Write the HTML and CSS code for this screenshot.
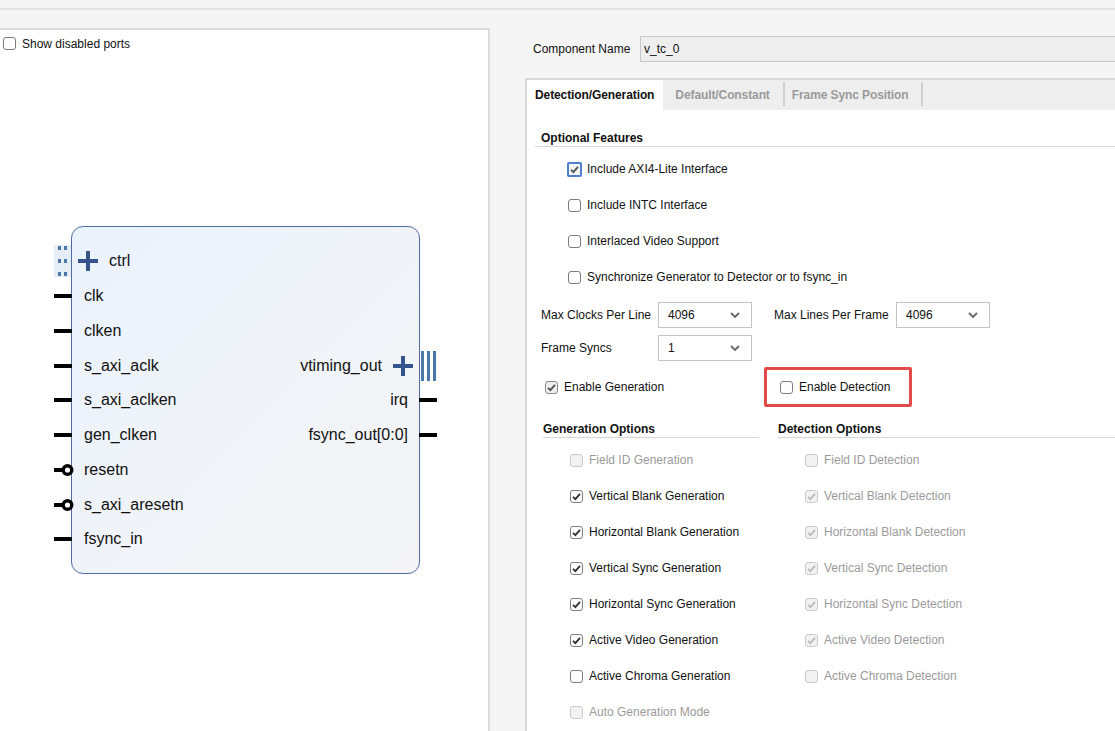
FILE: index.html
```html
<!DOCTYPE html>
<html>
<head>
<meta charset="utf-8">
<link rel="stylesheet" href="styles.css">
</head>
<body>
<div class="topbar"></div>
<div class="main">
  <div class="left-panel">
    <div class="show-row"><span class="cb"></span><span class="lbl">Show disabled ports</span></div>
    <div class="canvas">
      <div class="block">
        <div class="prow"><div class="pl ctrl"><span class="busl"><i></i><i></i><i></i><i></i><i></i><i></i></span><span class="plus"></span>ctrl</div></div>
        <div class="prow"><span class="pin-l"></span><div class="pl">clk</div></div>
        <div class="prow"><span class="pin-l"></span><div class="pl">clken</div></div>
        <div class="prow"><span class="pin-l"></span><div class="pl">s_axi_aclk</div><div class="pr">vtiming_out<span class="plus rplus"></span></div><span class="busr"><i></i><i></i><i></i></span></div>
        <div class="prow"><span class="pin-l"></span><div class="pl">s_axi_aclken</div><div class="pr">irq</div><span class="pin-r"></span></div>
        <div class="prow"><span class="pin-l"></span><div class="pl">gen_clken</div><div class="pr">fsync_out[0:0]</div><span class="pin-r"></span></div>
        <div class="prow"><svg class="pin-inv" width="24" height="14" viewBox="0 0 24 14"><line x1="0" y1="7" x2="9" y2="7" stroke="#000" stroke-width="4"/><circle cx="13.5" cy="7" r="4.3" fill="#fff" stroke="#000" stroke-width="3.4"/></svg><div class="pl">resetn</div></div>
        <div class="prow"><svg class="pin-inv" width="24" height="14" viewBox="0 0 24 14"><line x1="0" y1="7" x2="9" y2="7" stroke="#000" stroke-width="4"/><circle cx="13.5" cy="7" r="4.3" fill="#fff" stroke="#000" stroke-width="3.4"/></svg><div class="pl">s_axi_aresetn</div></div>
        <div class="prow"><span class="pin-l"></span><div class="pl">fsync_in</div></div>
      </div>
    </div>
  </div>
  <div class="right-panel">
    <div class="comp-row"><span class="comp-lbl">Component Name</span><div class="comp-input">v_tc_0</div></div>
    <div class="tabpane">
      <div class="tabs">
        <div class="tab active">Detection/Generation</div>
        <div class="tab sep">Default/Constant</div>
        <div class="tab sep t3">Frame Sync Position</div>
      </div>
      <div class="content">
        <div class="sec-head opt-head">Optional Features</div>
        <div class="opt-rows">
          <div class="row"><span class="cb focus"><svg viewBox="0 0 13 13"><path d="M3 6.8 L5.4 9.2 L10 3.8" fill="none" stroke="#555" stroke-width="1.9"/></svg></span><span class="lbl">Include AXI4-Lite Interface</span></div>
          <div class="row"><span class="cb"></span><span class="lbl">Include INTC Interface</span></div>
          <div class="row"><span class="cb"></span><span class="lbl">Interlaced Video Support</span></div>
          <div class="row"><span class="cb"></span><span class="lbl">Synchronize Generator to Detector or to fsync_in</span></div>
        </div>
        <div class="param-row">
          <span class="plbl w1">Max Clocks Per Line</span>
          <div class="select"><span>4096</span><svg width="10" height="6" viewBox="0 0 10 6"><path d="M1 1 L5 5 L9 1" fill="none" stroke="#666" stroke-width="1.8"/></svg></div>
          <span class="plbl w2">Max Lines Per Frame</span>
          <div class="select"><span>4096</span><svg width="10" height="6" viewBox="0 0 10 6"><path d="M1 1 L5 5 L9 1" fill="none" stroke="#666" stroke-width="1.8"/></svg></div>
        </div>
        <div class="param-row fs-row">
          <span class="plbl w1">Frame Syncs</span>
          <div class="select"><span>1</span><svg width="10" height="6" viewBox="0 0 10 6"><path d="M1 1 L5 5 L9 1" fill="none" stroke="#666" stroke-width="1.8"/></svg></div>
        </div>
        <div class="enable-row">
          <div class="en-gen"><span class="cb gray"><svg viewBox="0 0 13 13"><path d="M3 6.8 L5.4 9.2 L10 3.8" fill="none" stroke="#555" stroke-width="1.9"/></svg></span><span class="lbl">Enable Generation</span></div>
          <div class="en-det"><span class="cb"></span><span class="lbl">Enable Detection</span></div>
        </div>
        <div class="cols">
          <div class="col gen">
            <div class="sec-head">Generation Options</div>
            <div class="row dis"><span class="cb"></span><span class="lbl">Field ID Generation</span></div>
            <div class="row"><span class="cb"><svg viewBox="0 0 13 13"><path d="M3 6.8 L5.4 9.2 L10 3.8" fill="none" stroke="#333" stroke-width="1.9"/></svg></span><span class="lbl">Vertical Blank Generation</span></div>
            <div class="row"><span class="cb"><svg viewBox="0 0 13 13"><path d="M3 6.8 L5.4 9.2 L10 3.8" fill="none" stroke="#333" stroke-width="1.9"/></svg></span><span class="lbl">Horizontal Blank Generation</span></div>
            <div class="row"><span class="cb"><svg viewBox="0 0 13 13"><path d="M3 6.8 L5.4 9.2 L10 3.8" fill="none" stroke="#333" stroke-width="1.9"/></svg></span><span class="lbl">Vertical Sync Generation</span></div>
            <div class="row"><span class="cb"><svg viewBox="0 0 13 13"><path d="M3 6.8 L5.4 9.2 L10 3.8" fill="none" stroke="#333" stroke-width="1.9"/></svg></span><span class="lbl">Horizontal Sync Generation</span></div>
            <div class="row"><span class="cb"><svg viewBox="0 0 13 13"><path d="M3 6.8 L5.4 9.2 L10 3.8" fill="none" stroke="#333" stroke-width="1.9"/></svg></span><span class="lbl">Active Video Generation</span></div>
            <div class="row"><span class="cb"></span><span class="lbl">Active Chroma Generation</span></div>
            <div class="row dis"><span class="cb"></span><span class="lbl">Auto Generation Mode</span></div>
          </div>
          <div class="col det">
            <div class="sec-head">Detection Options</div>
            <div class="row dis"><span class="cb"></span><span class="lbl">Field ID Detection</span></div>
            <div class="row dis"><span class="cb"><svg viewBox="0 0 13 13"><path d="M3 6.8 L5.4 9.2 L10 3.8" fill="none" stroke="#bbb" stroke-width="1.9"/></svg></span><span class="lbl">Vertical Blank Detection</span></div>
            <div class="row dis"><span class="cb"><svg viewBox="0 0 13 13"><path d="M3 6.8 L5.4 9.2 L10 3.8" fill="none" stroke="#bbb" stroke-width="1.9"/></svg></span><span class="lbl">Horizontal Blank Detection</span></div>
            <div class="row dis"><span class="cb"><svg viewBox="0 0 13 13"><path d="M3 6.8 L5.4 9.2 L10 3.8" fill="none" stroke="#bbb" stroke-width="1.9"/></svg></span><span class="lbl">Vertical Sync Detection</span></div>
            <div class="row dis"><span class="cb"><svg viewBox="0 0 13 13"><path d="M3 6.8 L5.4 9.2 L10 3.8" fill="none" stroke="#bbb" stroke-width="1.9"/></svg></span><span class="lbl">Horizontal Sync Detection</span></div>
            <div class="row dis"><span class="cb"><svg viewBox="0 0 13 13"><path d="M3 6.8 L5.4 9.2 L10 3.8" fill="none" stroke="#bbb" stroke-width="1.9"/></svg></span><span class="lbl">Active Video Detection</span></div>
            <div class="row dis"><span class="cb"></span><span class="lbl">Active Chroma Detection</span></div>
          </div>
        </div>
      </div>
    </div>
  </div>
</div>
</body>
</html>
```
FILE: styles.css
```css
* { box-sizing: border-box; }
html, body { margin: 0; padding: 0; }
body {
  width: 1115px;
  height: 731px;
  overflow: hidden;
  background: #f5f5f5;
  font-family: "Liberation Sans", Arial, sans-serif;
  font-size: 12px;
  color: #111;
}
.topbar {
  height: 10px;
  border-bottom: 2px solid #e2e2e2;
  background: #f5f5f5;
}
.main {
  display: flex;
  height: 721px;
  overflow: hidden;
}
.left-panel {
  width: 490px;
  margin-top: 18px;
  background: #fff;
  border-top: 2px solid #dcdcdc;
  border-right: 2px solid #dcdcdc;
  flex: none;
}
.show-row {
  display: flex;
  align-items: center;
  height: 27px;
  padding-left: 3px;
}
.show-row .lbl { margin-left: 6px; }
.canvas {
  padding: 169px 0 0 71px;
}
.block {
  width: 349px;
  height: 348px;
  border: 1px solid #4e6c9e;
  border-radius: 12px;
  background: linear-gradient(135deg, #eaf2fc 0%, #f1f4f8 60%, #f4f4f6 100%);
  padding-top: 17px;
  font-size: 16px;
  color: #111;
}
.prow {
  position: relative;
  height: 34.75px;
  display: flex;
  align-items: center;
  justify-content: space-between;
  padding: 0 11px 0 12px;
}
.pl { display: flex; align-items: center; }
.pr { display: flex; align-items: center; }
.plus {
  position: relative;
  width: 20px;
  height: 20px;
  display: inline-block;
}
.plus::before, .plus::after {
  content: "";
  position: absolute;
  background: #34548c;
}
.plus::before { left: 0; top: 8px; width: 20px; height: 4px; }
.plus::after { left: 8px; top: 0; width: 4px; height: 20px; }
.ctrl .plus { margin-left: -6px; margin-right: 11px; }
.rplus { margin-left: 11px; margin-right: -5px; }
.pin-l, .pin-r {
  position: absolute;
  top: 50%;
  width: 18px;
  height: 4px;
  margin-top: -2px;
  background: #000;
}
.pin-l { left: -18px; }
.pin-r { right: -18px; }
.pin-inv {
  position: absolute;
  left: -18px;
  top: 50%;
  margin-top: -7px;
}
.busl {
  position: absolute;
  left: -18px;
  top: 50%;
  margin-top: -16px;
  width: 17px;
  height: 32px;
  background: #e5edf6;
  display: grid;
  grid-template-columns: 3px 3px;
  grid-template-rows: 4px 4px 4px;
  column-gap: 3px;
  row-gap: 9px;
  padding: 1px 0 0 4px;
}
.busl i { background: #4a78ac; display: block; }
.busr {
  position: absolute;
  right: -18px;
  top: 50%;
  margin-top: -15px;
  width: 17px;
  height: 30px;
  display: flex;
  gap: 3px;
  padding-left: 1px;
}
.busr i { width: 3px; height: 30px; background: #4a78a8; display: block; }

.right-panel {
  flex: 1;
  padding: 26px 0 0 35px;
  min-width: 0;
  display: flex;
  flex-direction: column;
  overflow: hidden;
}
.comp-row {
  display: flex;
  align-items: center;
  padding-left: 8px;
  flex: none;
}
.comp-lbl { width: 107px; flex: none; }
.comp-input {
  flex: 1;
  height: 26px;
  background: #eeeeee;
  border: 1px solid #c8c8c8;
  border-right: none;
  display: flex;
  align-items: center;
  padding-left: 3px;
}
.tabpane {
  margin-top: 16px;
  border-top: 2px solid #d9d9d9;
  border-left: 2px solid #d9d9d9;
  background: #fff;
  flex: 1;
  overflow: hidden;
}
.tabs {
  display: flex;
  height: 30px;
  background: #eeeeee;
  align-items: stretch;
}
.tab {
  display: flex;
  align-items: center;
  font-weight: bold;
  color: #9a9a9a;
  padding: 0 15px 0 12px;
  position: relative;
  letter-spacing: -0.1px;
}
.tab.active {
  background: #fff;
  color: #111;
  padding: 0 9px 0 8px;
}
.tab.sep::after {
  content: "";
  position: absolute;
  right: 0;
  top: 2px;
  bottom: 4px;
  width: 2px;
  background: #cfcfcf;
}
.tab.t3 { padding-left: 7px; padding-right: 14px; }
.content {
  background: #fff;
}
.sec-head {
  font-weight: bold;
  line-height: 16px;
  border-bottom: 1px solid #d6d6d6;
}
.opt-head {
  margin: 20px 0 0 8px;
  padding-left: 6px;
}
.opt-rows { margin-top: 4px; padding-left: 41px; }
.row {
  display: flex;
  align-items: center;
  height: 36px;
}
.lbl { margin-left: 6px; white-space: nowrap; }
.cb {
  width: 13px;
  height: 13px;
  flex: none;
  border: 1px solid #7d7d7d;
  border-radius: 3px;
  background: #fff;
  display: inline-flex;
  align-items: center;
  justify-content: center;
}
.cb svg { width: 13px; height: 13px; display: block; margin: -1px; }
.cb.focus {
  border: 2px solid #4f7fcf;
  width: 15px;
  height: 15px;
  margin-left: -1px;
  margin-right: -1px;
  border-radius: 2px;
  background: #f4f4f4;
}
.cb.focus svg { margin: -2px; }
.cb.gray { background: #eeeeee; border-color: #8a8a8a; }
.param-row {
  display: flex;
  align-items: center;
  margin-top: 7px;
  padding-left: 14px;
  height: 26px;
}
.fs-row { margin-top: 7px; }
.plbl { flex: none; }
.w1 { width: 117px; }
.w2 { width: 122px; margin-left: 22px; }
.select {
  width: 94px;
  height: 26px;
  border: 1px solid #c3c3c3;
  background: #fff;
  display: flex;
  align-items: center;
  justify-content: space-between;
  padding: 0 11px 0 9px;
}
.enable-row {
  display: flex;
  align-items: center;
  margin-top: 6px;
  height: 40px;
}
.en-gen {
  display: flex;
  align-items: center;
  width: 237px;
  padding-left: 18px;
}
.en-gen .lbl { margin-left: 6px; }
.en-det {
  display: flex;
  align-items: center;
  width: 148px;
  height: 40px;
  border: 3px solid #e34b4b;
  border-radius: 2px;
  padding-left: 13px;
}
.en-det .lbl { margin-left: 6px; }
.cols {
  display: flex;
  margin-top: 14px;
}
.col.gen { width: 216px; margin-left: 16px; }
.col.det { flex: 1; margin-left: 19px; }
.col .sec-head { margin-bottom: 4px; }
.col .row { padding-left: 27px; }
.row.dis .lbl { color: #9b9b9b; }
.row.dis .cb { border-color: #cacaca; background: #f2f2f2; }
```
